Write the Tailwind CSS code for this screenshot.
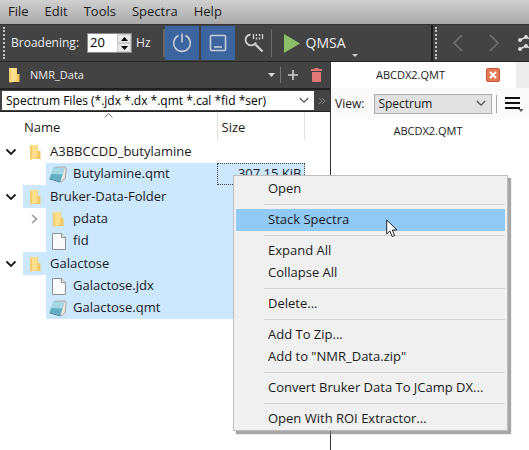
<!DOCTYPE html>
<html lang="en">
<head>
    <meta charset="UTF-8">
    <meta name="viewport" content="width=device-width, initial-scale=1.0">
    <title>NMR_Data</title>
    <script src="https://cdn.jsdelivr.net/npm/@tailwindcss/browser@4"></script>
</head>
<body class="flex flex-col h-screen overflow-hidden bg-white text-[#1a1a1a] font-['Open_Sans','Noto_Sans',sans-serif] text-[13px]">
    <svg class="hidden">
        <symbol id="folder" viewBox="0 0 12 16">
            <path d="M1 1h8v6h2.500v8H1z" fill="#f0c75e"/>
            <path d="M1 1h7.500v12.500L3 15.500 1 15z" fill="#ffdf8c"/>
            <path d="M1 1l2 1.500v13L1 15z" fill="#f3cd6c"/>
        </symbol>
        <symbol id="page" viewBox="0 0 14 17">
            <path d="M.5.5h9l4 4v12H.5z" fill="#fafafa" stroke="#8f8f8f"/>
            <path d="M9.500.5v4h4" fill="#e8e8e8" stroke="#8f8f8f"/>
        </symbol>
        <symbol id="notebook" viewBox="0 0 18 17">
            <path d="M5 1.500L16 .8l1.200 1.700-1 10-4 3.500z" fill="#ece8dc" stroke="#8b8478" stroke-width=".7"/>
            <path d="M5 1.500l10.500.5L11.500 15.500.3 12.500z" fill="#62afc4"/>
            <path d="M5 1.500l10.500.5-2 6.500L2.500 8z" fill="#a4d8e4"/>
            <path d="M.3 12.500l11.200 3v1L.8 13.600z" fill="#44788a"/>
        </symbol>
        <symbol id="down" viewBox="0 0 12 8">
            <path d="M1.500 1.500L6 6l4.500-4.500" fill="none" stroke="currentColor" stroke-width="1.800"/>
        </symbol>
    </svg>

    <nav class="flex shrink-0 items-center h-6 pl-2 gap-4 bg-linear-to-b from-[#d0d0d0] to-[#a9a9a9]">
        <button>File</button>
        <button>Edit</button>
        <button>Tools</button>
        <button>Spectra</button>
        <button>Help</button>
    </nav>

    <div class="flex shrink-0 items-center h-[38px] border-t border-b border-t-[#333] border-b-[#262626] bg-[#434343] text-[#ececec] text-xs overflow-hidden">
        <div class="flex items-center flex-1 h-full min-w-0">
            <div class="h-8 ml-[3px] mr-[6px] border-l-2 border-dotted border-[#c4c4c4]"></div>
            <label for="broadening">Broadening:</label>
            <div class="flex h-5 ml-2 border border-[#8a8a8a] bg-white">
                <input id="broadening" type="text" inputmode="numeric" value="20" class="w-[29px] pl-[2px] text-[13px] text-black outline-none">
                <div class="flex flex-col w-[14px] bg-[#e9e9e9]">
                    <button aria-label="Increase" class="flex flex-1 items-center justify-center border border-[#c9c9c9]"><svg class="w-[7px] h-1" viewBox="0 0 7 4"><path d="M3.500 0L7 4H0z"/></svg></button>
                    <button aria-label="Decrease" class="flex flex-1 items-center justify-center border border-[#c9c9c9]"><svg class="w-[7px] h-1" viewBox="0 0 7 4"><path d="M0 0h7L3.500 4z"/></svg></button>
                </div>
            </div>
            <span class="ml-1">Hz</span>
            <div class="w-[2px] h-7 ml-3 bg-[#666]"></div>
            <button aria-label="Power" class="flex items-center justify-center w-[34px] h-[34px] bg-[#3c659f]">
                <svg class="w-5 h-5" viewBox="0 0 20 20" fill="none" stroke="#c6cdd8" stroke-width="1.600"><path d="M6.500 2.500a8.300 8.300 0 1 0 7 0M10 .5v9"/></svg>
            </button>
            <button aria-label="Panel" class="flex items-center justify-center w-[34px] h-[34px] ml-[2px] bg-[#3c659f]">
                <svg class="w-[18px] h-[18px]" viewBox="0 0 18 18" fill="none" stroke="#c6cdd8" stroke-width="1.600"><rect x="1.500" y="1.500" width="15" height="15" rx="1"/><path d="M5 13h8"/></svg>
            </button>
            <button aria-label="Zoom to peaks" class="ml-[9px]">
                <svg class="w-5 h-5" viewBox="0 0 20 20" fill="none" stroke="#cdcdcd"><path d="M6.500 1.500a5.500 5.500 0 1 0 5.500 8" stroke-width="1.800"/><path d="M11.500 11.500l7 7" stroke-width="2.400"/><path d="M9.500 1v5M12.500 1v2M12.500 4.500v2M15.500 1v2M15.500 4.500v2M18.500 1v5" stroke-width="1.400"/></svg>
            </button>
            <div class="w-px h-7 ml-[7px] bg-[#6d6d6d]"></div>
            <button class="flex items-center h-full pl-3 gap-[6px] text-sm">
                <svg class="w-4 h-[19px]" viewBox="0 0 16 19"><path d="M0 0l16 9.500L0 19z" fill="#8cbf68"/></svg>
                QMSA
                <svg class="w-[6px] h-[3px] self-end mb-1" viewBox="0 0 6 3"><path d="M0 0h6L3 3z" fill="#cfcfcf"/></svg>
            </button>
        </div>
        <div class="flex items-center w-[98px] h-full border-l-2 border-[#1f1f1f] text-[#787878]">
            <div class="h-8 ml-[2px] border-l-2 border-dotted border-[#c4c4c4]"></div>
            <button aria-label="Back" class="ml-4"><svg class="w-[10px] h-[18px]" viewBox="0 0 10 18" fill="none" stroke="currentColor" stroke-width="1.400"><path d="M9 1L1 9l8 8"/></svg></button>
            <button aria-label="Forward" class="ml-[26px]"><svg class="w-[10px] h-[18px]" viewBox="0 0 10 18" fill="none" stroke="currentColor" stroke-width="1.400"><path d="M1 1l8 8-8 8"/></svg></button>
            <div class="w-px h-7 ml-[11px] bg-[#6d6d6d]"></div>
            <button aria-label="Stack" class="ml-2 shrink-0"><svg class="w-5 h-5" viewBox="0 0 20 20" fill="#dcdcdc" stroke="#dcdcdc" stroke-width="1.500"><circle cx="2" cy="7" r="1.200"/><path d="M2 7l6-3 4 2 6-2M2 16l6-3 4 2 6-2" fill="none"/><circle cx="8" cy="4" r="1.200"/><circle cx="2" cy="16" r="1.200"/><circle cx="8" cy="13" r="1.200"/></svg></button>
        </div>
    </div>

    <div class="flex flex-1 min-h-0">
        <section class="w-[331px] shrink-0 border-r border-[#333]">
            <div class="flex items-center h-[26px] pl-2 bg-[#434343] text-[#ececec] text-[11px]">
                <svg class="w-3 h-4"><use href="#folder"/></svg>
                <span class="ml-[10px]">NMR_Data</span>
                <button aria-label="History" class="ml-auto"><svg class="w-[7px] h-1" viewBox="0 0 7 4"><path d="M0 0h7L3.500 4z" fill="#d6d6d6"/></svg></button>
                <div class="w-px h-4 ml-[5px] bg-[#777]"></div>
                <button aria-label="Add" class="ml-[7px]"><svg class="w-[10px] h-[10px]" viewBox="0 0 10 10" stroke="#cfcfcf" stroke-width="1.600"><path d="M5 0v10M0 5h10"/></svg></button>
                <button aria-label="Delete" class="ml-[13px] mr-2"><svg class="w-[11px] h-[14px]" viewBox="0 0 11 14" fill="#e27676"><path d="M3.500 0h4v1H11v2H0V1h3.500zM1 4h9v9a1 1 0 0 1-1 1H2a1 1 0 0 1-1-1z"/></svg></button>
            </div>
            <div class="flex items-center h-6 pl-[2px] border-t-2 border-b border-[#222] bg-[#434343]">
                <div class="flex items-center relative w-[312px] h-[19px] bg-white">
                    <select aria-label="File filter" class="appearance-none w-full h-full pl-1 bg-transparent text-black text-xs outline-none">
                        <option>Spectrum Files (*.jdx *.dx *.qmt *.cal *fid *ser)</option>
                    </select>
                    <svg class="absolute right-[5px] w-[10px] h-[7px] pointer-events-none" viewBox="0 0 12 8"><path d="M1 1l5 5 5-5" fill="none" stroke="#555" stroke-width="1.500"/></svg>
                </div>
                <svg class="w-2 h-2 ml-1" viewBox="0 0 8 8" fill="none" stroke="#858585"><path d="M1 1l3 3-3 3M4 1l3 3-3 3"/></svg>
            </div>

            <table class="w-[305px] table-fixed border-collapse">
                <thead>
                    <tr class="h-7 text-left">
                        <th class="relative w-[217px] p-0 pl-6 pt-1 font-normal border-r border-[#e2e2e2]">Name
                            <svg class="absolute top-[1px] left-[104px] w-[9px] h-[5px]" viewBox="0 0 9 5"><path d="M.5 4.500l4-4 4 4" fill="none" stroke="#777"/></svg>
                        </th>
                        <th class="p-0 pl-1 pt-1 font-normal border-r border-[#e2e2e2]">Size</th>
                    </tr>
                </thead>
                <tbody>
                    <tr class="h-[23px]">
                        <td class="p-0"><div class="flex items-center h-[23px] pl-[5px]">
                            <svg class="w-3 h-2 mr-3"><use href="#down"/></svg><svg class="w-3 h-4 mr-[9px]"><use href="#folder"/></svg>A3BBCCDD_butylamine
                        </div></td>
                        <td class="p-0"></td>
                    </tr>
                    <tr class="h-[22px]">
                        <td class="p-0 pl-[46px]"><div class="flex items-center h-[22px] pl-[3px] bg-[#cce8ff]">
                            <svg class="w-[18px] h-[17px] mr-[6px]"><use href="#notebook"/></svg>Butylamine.qmt
                        </div></td>
                        <td class="p-0 bg-[#cce8ff]"><div class="flex items-center justify-end h-[22px] pr-[2px] border border-dotted border-[#444]">307.15 KiB</div></td>
                    </tr>
                    <tr class="h-[23px]">
                        <td class="p-0"><div class="flex items-center h-[23px] pl-[5px]">
                            <svg class="w-3 h-2 mr-[6px]"><use href="#down"/></svg>
                            <div class="flex flex-1 items-center h-full pl-[6px] bg-[#cce8ff]"><svg class="w-3 h-4 mr-[9px]"><use href="#folder"/></svg>Bruker-Data-Folder</div>
                        </div></td>
                        <td class="p-0 bg-[#cce8ff]"></td>
                    </tr>
                    <tr class="h-[22px]">
                        <td class="p-0"><div class="flex items-center h-[22px] pl-[31px]">
                            <svg class="w-[7px] h-[10px] mr-2" viewBox="0 0 7 10"><path d="M1 1l4.500 4L1 9" fill="none" stroke="#999" stroke-width="1.600"/></svg>
                            <div class="flex flex-1 items-center h-full pl-[6px] bg-[#cce8ff]"><svg class="w-3 h-4 mr-[9px]"><use href="#folder"/></svg>pdata</div>
                        </div></td>
                        <td class="p-0 bg-[#cce8ff]"></td>
                    </tr>
                    <tr class="h-[22px]">
                        <td class="p-0 pl-[46px]"><div class="flex items-center h-[22px] pl-[6px] bg-[#cce8ff]">
                            <svg class="w-[14px] h-[17px] mr-[7px]"><use href="#page"/></svg>fid
                        </div></td>
                        <td class="p-0 bg-[#cce8ff]"></td>
                    </tr>
                    <tr class="h-[23px]">
                        <td class="p-0"><div class="flex items-center h-[23px] pl-[5px]">
                            <svg class="w-3 h-2 mr-[6px]"><use href="#down"/></svg>
                            <div class="flex flex-1 items-center h-full pl-[6px] bg-[#cce8ff]"><svg class="w-3 h-4 mr-[9px]"><use href="#folder"/></svg>Galactose</div>
                        </div></td>
                        <td class="p-0 bg-[#cce8ff]"></td>
                    </tr>
                    <tr class="h-[22px]">
                        <td class="p-0 pl-[46px]"><div class="flex items-center h-[22px] pl-[6px] bg-[#cce8ff]">
                            <svg class="w-[14px] h-[17px] mr-[7px]"><use href="#page"/></svg>Galactose.jdx
                        </div></td>
                        <td class="p-0 bg-[#cce8ff]"></td>
                    </tr>
                    <tr class="h-[22px]">
                        <td class="p-0 pl-[46px]"><div class="flex items-center h-[22px] pl-[3px] bg-[#cce8ff]">
                            <svg class="w-[18px] h-[17px] mr-[6px]"><use href="#notebook"/></svg>Galactose.qmt
                        </div></td>
                        <td class="p-0 bg-[#cce8ff]"></td>
                    </tr>
                </tbody>
            </table>
        </section>

        <section class="flex-1 min-w-0 text-[11px]">
            <div class="flex h-[26px] bg-[#ececec]">
                <div class="flex flex-1 items-center pl-[45px] pr-4 bg-white">
                    <span>ABCDX2.QMT</span>
                    <button aria-label="Close tab" class="ml-auto"><svg class="w-[14px] h-[14px]" viewBox="0 0 14 14"><rect x=".5" y=".5" width="13" height="13" rx="1.500" fill="#e27a55" stroke="#c9563a"/><path d="M4 4l6 6M10 4l-6 6" stroke="#fff" stroke-width="2"/></svg></button>
                </div>
                <div class="w-[13px]"></div>
            </div>
            <div class="flex items-center h-[31px] pl-1 bg-[#fafafa] text-xs">
                <label for="view">View:</label>
                <div class="flex items-center relative flex-1 h-5 ml-[10px] border border-[#adadad] bg-[#e1e1e1]">
                    <select id="view" class="appearance-none w-full h-full pl-[3px] outline-none">
                        <option>Spectrum</option>
                    </select>
                    <svg class="absolute right-[5px] w-[10px] h-[7px] pointer-events-none" viewBox="0 0 12 8"><path d="M1 1l5 5 5-5" fill="none" stroke="#555" stroke-width="1.500"/></svg>
                </div>
                <div class="w-px h-[18px] ml-1 bg-[#a8a8a8]"></div>
                <button aria-label="Menu" class="ml-2 mr-[5px]"><svg class="w-[19px] h-4" viewBox="0 0 19 16"><path d="M0 2h15M0 7h15M0 12h15" stroke="#111" stroke-width="2"/><path d="M13.500 13h5L16 16z" fill="#555"/></svg></button>
            </div>
            <h1 class="pt-1 pr-1 text-center">ABCDX2.QMT</h1>
        </section>
    </div>

    <div role="menu" class="absolute left-[233px] top-[175px] flex flex-col w-[275px] pt-[2px] px-[2px] border border-[#bdbdbd] bg-[#f0f0f0] shadow-[3px_3px_1px_#808080b0]">
        <button role="menuitem" class="h-[22px] pl-8 text-left">Open</button>
        <hr class="my-1 ml-7 border-[#d4d4d4]">
        <button role="menuitem" class="h-[22px] pl-8 text-left bg-[#91c9f7]">Stack Spectra</button>
        <hr class="my-1 ml-7 border-[#d4d4d4]">
        <button role="menuitem" class="h-[22px] pl-8 text-left">Expand All</button>
        <button role="menuitem" class="h-[22px] pl-8 text-left">Collapse All</button>
        <hr class="my-1 ml-7 border-[#d4d4d4]">
        <button role="menuitem" class="h-[22px] pl-8 text-left">Delete...</button>
        <hr class="my-1 ml-7 border-[#d4d4d4]">
        <button role="menuitem" class="h-[22px] pl-8 text-left">Add To Zip...</button>
        <button role="menuitem" class="h-[22px] pl-8 text-left">Add to "NMR_Data.zip"</button>
        <hr class="my-1 ml-7 border-[#d4d4d4]">
        <button role="menuitem" class="h-[22px] pl-8 text-left whitespace-nowrap">Convert Bruker Data To JCamp DX...</button>
        <hr class="my-1 ml-7 border-[#d4d4d4]">
        <button role="menuitem" class="h-[22px] pl-8 text-left">Open With ROI Extractor...</button>
    </div>

    <!-- mouse pointer -->
    <svg class="absolute left-[386px] top-[219px] w-3 h-[19px]" viewBox="0 0 12 19"><path d="M.7 1v14l3.200-3 2.300 5.500 2.400-1L6.300 11H11z" fill="#fff" stroke="#222"/></svg>
</body>
</html>
